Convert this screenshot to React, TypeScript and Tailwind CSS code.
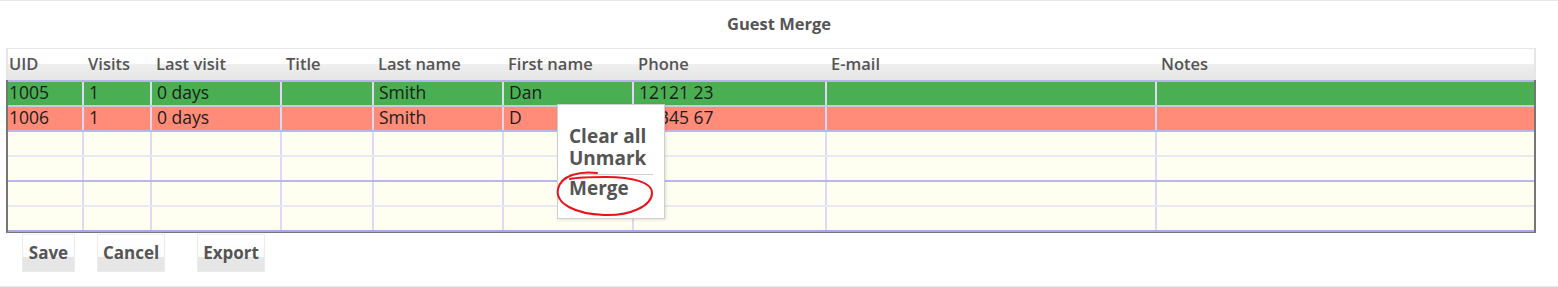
import React from "react";

const cols = [
  { name: "UID", w: "w-[74px]" },
  { name: "Visits", w: "w-[68px]" },
  { name: "Last visit", w: "w-[130px]" },
  { name: "Title", w: "w-[92px]" },
  { name: "Last name", w: "w-[130px]" },
  { name: "First name", w: "w-[130px]" },
  { name: "Phone", w: "w-[193px]" },
  { name: "E-mail", w: "w-[330px]" },
  { name: "Notes", w: "w-[378px]" },
];

const rows: { bg: string; line: string; cells: string[] }[] = [
  { bg: "bg-[#4aae53]", line: "border-[#b7b3ee]", cells: ["1005", "1", "0 days", "", "Smith", "Dan", "12121 23", "", ""] },
  { bg: "bg-[#ff8b79]", line: "border-[#cdc7df]", cells: ["1006", "1", "0 days", "", "Smith", "D", "12345 67", "", ""] },
  { bg: "bg-[#fefff0]", line: "border-[#b9b6f0]", cells: ["", "", "", "", "", "", "", "", ""] },
  { bg: "bg-[#fefff0]", line: "border-[#e9e9f3]", cells: ["", "", "", "", "", "", "", "", ""] },
  { bg: "bg-[#fefff0]", line: "border-[#b9b6f0]", cells: ["", "", "", "", "", "", "", "", ""] },
  { bg: "bg-[#fefff0]", line: "border-[#e9e9f3]", cells: ["", "", "", "", "", "", "", "", ""] },
];

function Btn({ label, w }: { label: string; w: string }) {
  return (
    <div
      className={`${w} h-[38px] flex items-center justify-center border border-[#ececec] bg-[linear-gradient(to_bottom,#ffffff_0%,#fbfbfb_60%,#e6e6e6_60%,#e6e6e6_100%)] text-[17px] font-bold text-[#555]`}
    >
      {label}
    </div>
  );
}

export default function App() {
  return (
    <div
      className="relative w-[1558px] h-[287px] bg-white border-t border-b border-[#e8e8e8] overflow-hidden"
      style={{ fontFamily: '"Open Sans", "Noto Sans", sans-serif' }}
    >
      <div className="h-[47px] flex items-center justify-center text-[16.5px] font-bold text-[#555]">
        Guest Merge
      </div>

      <div className="ml-[6px] w-[1530px]">
        {/* header */}
        <div className="flex h-[32px] border-t border-l-2 border-r-2 border-[#e6e6e6] bg-[linear-gradient(to_bottom,#ffffff_0%,#ffffff_50%,#efefef_50%,#e5e5e5_100%)]">
          {cols.map((c, i) => (
            <div
              key={c.name}
              className={`${c.w} shrink-0 flex items-center pb-[1px] ${i === 0 ? "pl-[1px]" : "pl-[6px]"} text-[16.5px] font-semibold text-[#555] whitespace-nowrap`}
            >
              {c.name}
            </div>
          ))}
        </div>
        {/* body */}
        <div className="border-l-2 border-r-2 border-[#777] border-b border-b-[#777]">
          {rows.map((r, ri) => (
            <div key={ri} className={`flex h-[25px] border-t-2 ${r.line} ${r.bg}`}>
              {r.cells.map((t, ci) => (
                <div
                  key={ci}
                  className={`${cols[ci].w} shrink-0 flex items-center pb-[2px] ${
                    ci === 0 ? "pl-[1px]" : "pl-[5px] border-l-2 border-[#dcd9f5]"
                  } text-[17.5px] text-[#1c1c1c] whitespace-nowrap`}
                >
                  {t}
                </div>
              ))}
            </div>
          ))}
          <div className="h-[2px] bg-[#aaa6ee]" />
        </div>
      </div>

      <div className="flex pl-[22px] pt-[1px]">
        <Btn label="Save" w="w-[53px]" />
        <div className="w-[22px]" />
        <Btn label="Cancel" w="w-[68px]" />
        <div className="w-[32px]" />
        <Btn label="Export" w="w-[68px]" />
      </div>

      {/* context menu */}
      <div className="absolute left-[557px] top-[103px] w-[108px] h-[115px] bg-white border border-[#cfcfcf] shadow-[1px_1px_3px_rgba(0,0,0,0.12)] pt-[20px] px-[11px] text-[19px] font-bold text-[#555] leading-[22px]">
        <div>Clear all</div>
        <div>Unmark</div>
        <div className="mt-[5px] border-t border-[#cfcfcf] pt-[2px]">Merge</div>
      </div>

      {/* red annotation */}
      <svg className="absolute left-0 top-0 pointer-events-none" width="1558" height="287">
        <path
          d="M 597 172 C 580 170, 561 174, 558 188 C 555 203, 576 213, 604 214 C 630 215, 652 205, 652 192 C 652 181, 632 176, 606 176 C 591 176, 579 176, 570 178"
          fill="none"
          stroke="#e8141b"
          strokeWidth="2"
          strokeLinecap="round"
        />
      </svg>
    </div>
  );
}
